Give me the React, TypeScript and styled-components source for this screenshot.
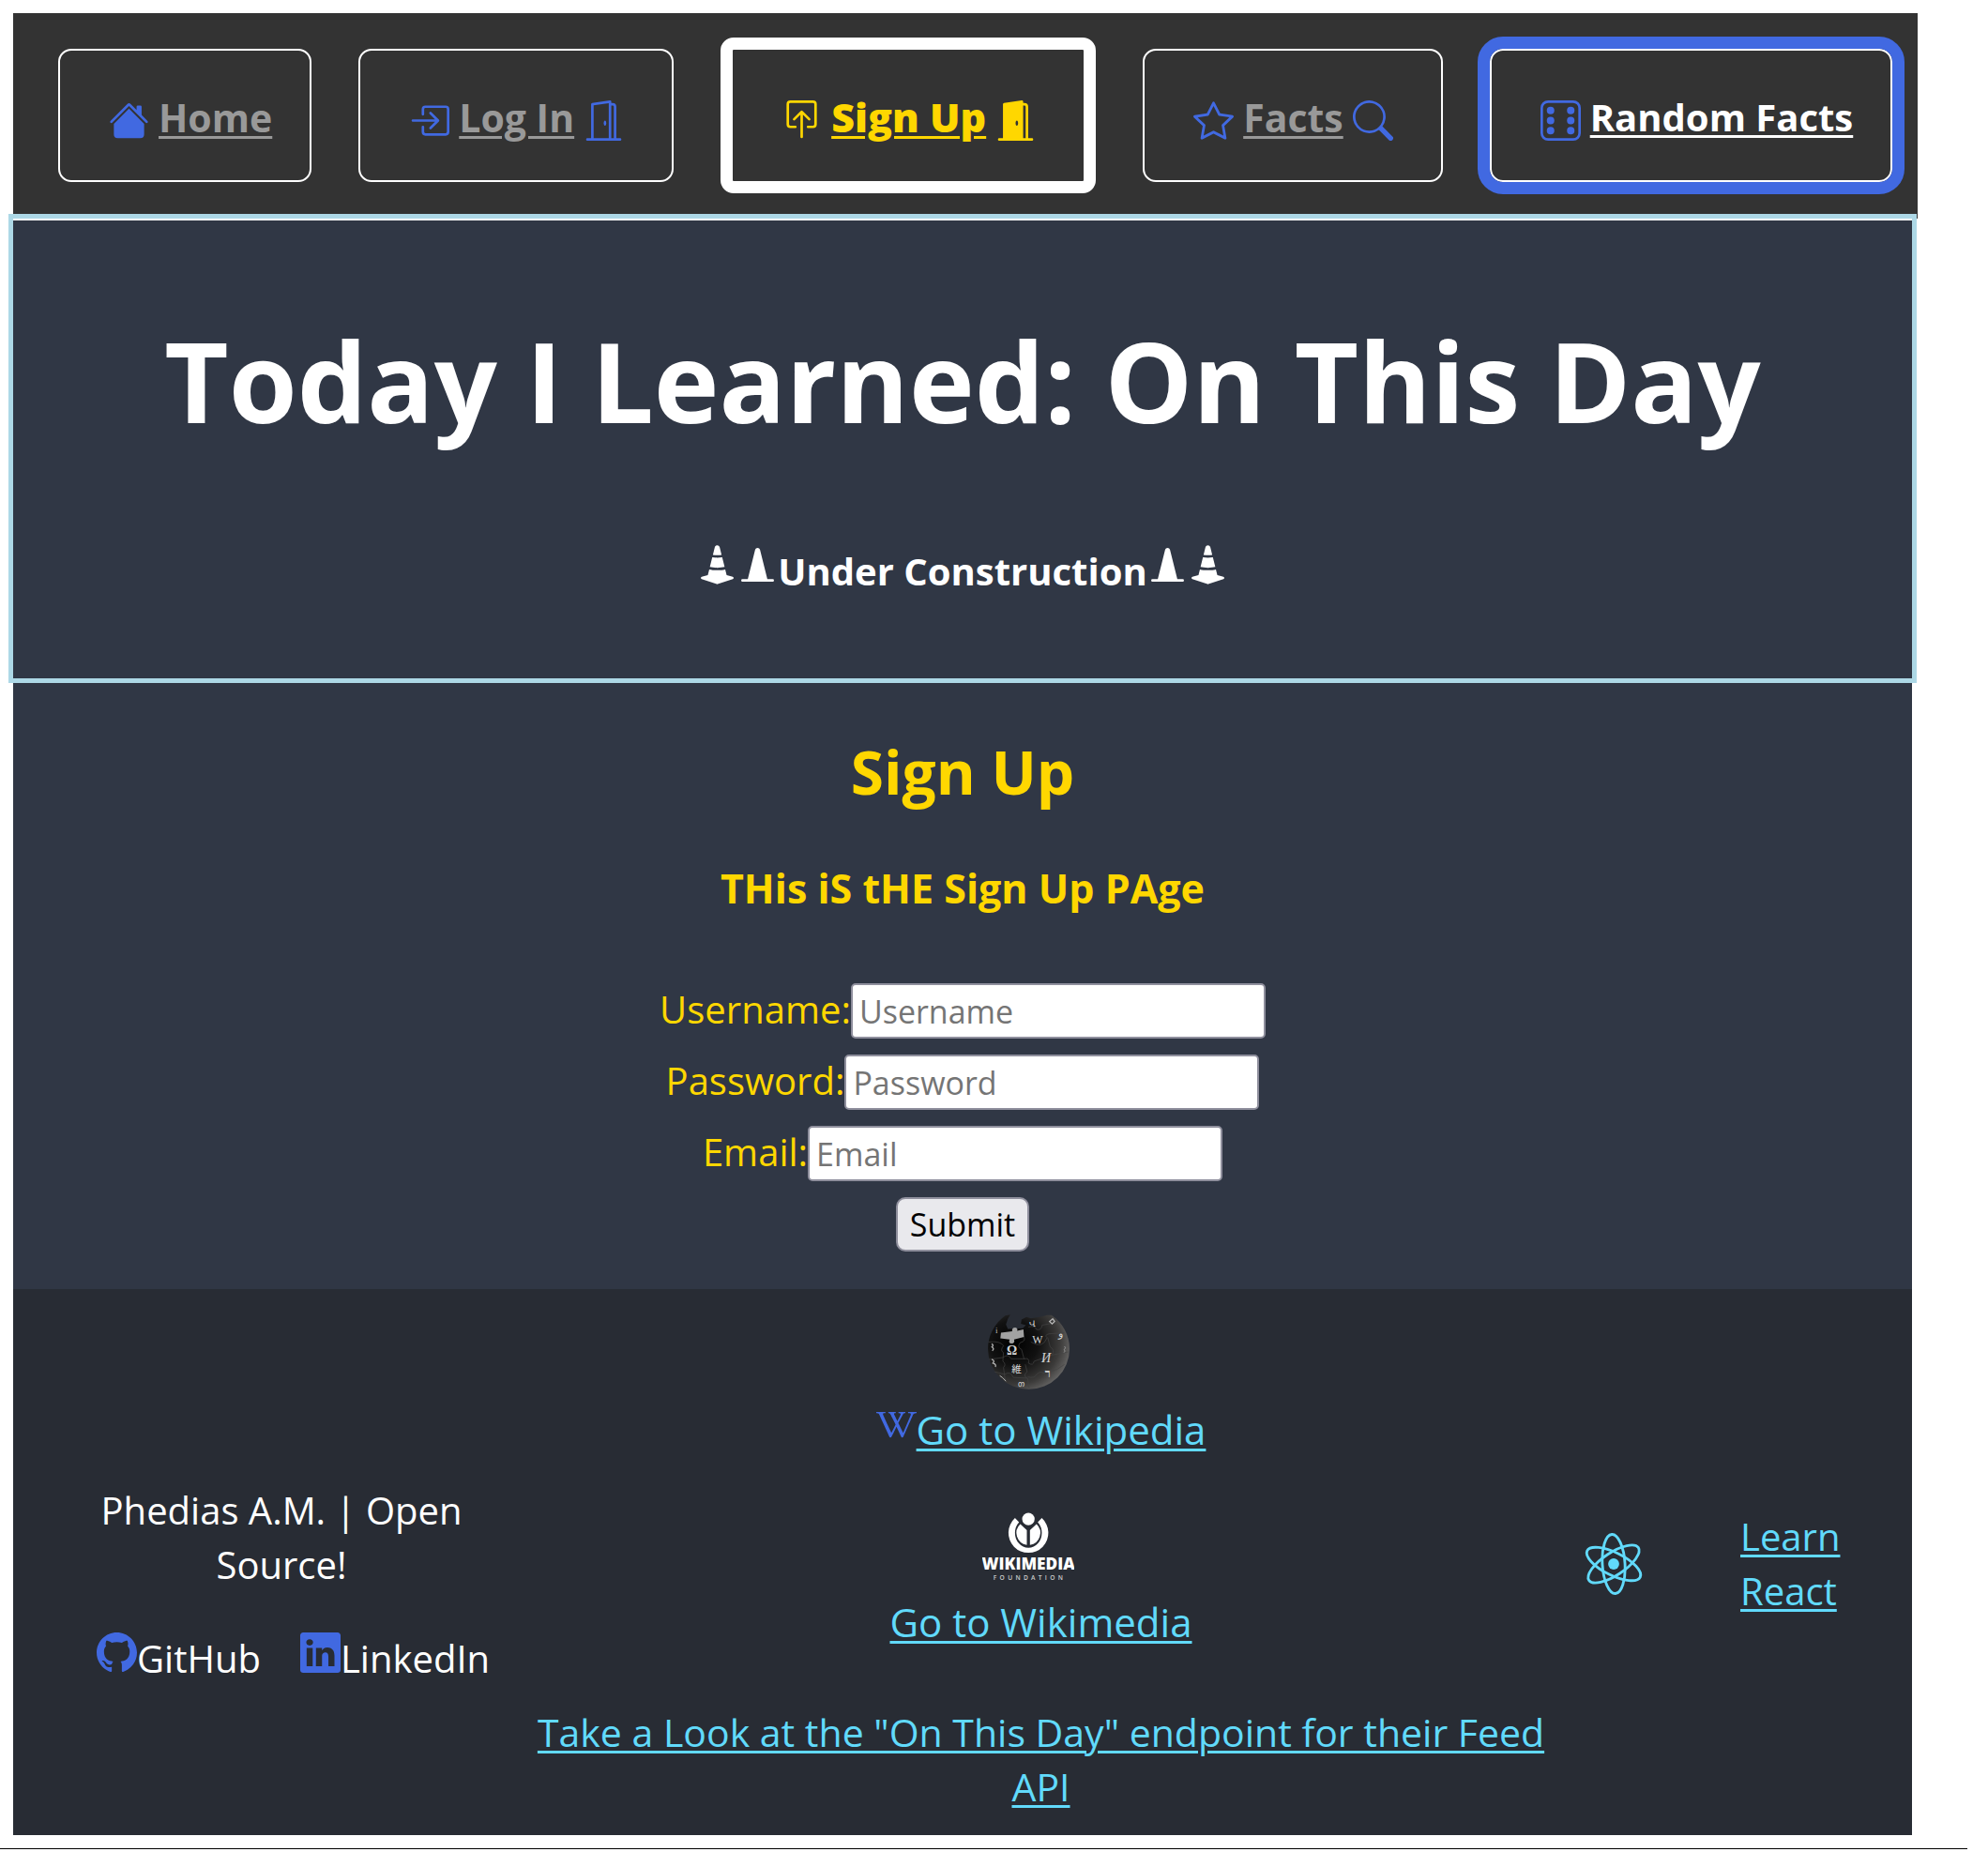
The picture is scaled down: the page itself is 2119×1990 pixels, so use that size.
import React from "react";
import styled, { createGlobalStyle, css } from "styled-components";
import {
  BsBoxArrowInRight,
  BsBoxArrowInUp,
  BsCone,
  BsConeStriped,
  BsDice6,
  BsDoorOpen,
  BsDoorOpenFill,
  BsGithub,
  BsHouseFill,
  BsLinkedin,
  BsSearch,
  BsStar,
  BsWikipedia,
} from "react-icons/bs";

const color = {
  royal: "#4169e1",
  gold: "#ffd700",
  sky: "#61dafb",
  pale: "#add8e6",
  bar: "#333333",
  main: "#303745",
  footer: "#282c34",
  muted: "#999999",
};

const GlobalStyle = createGlobalStyle`
  *, *::before, *::after { box-sizing: border-box; }
  body {
    margin: 0;
    background: #fff;
    color: #fff;
    font-family: "Open Sans", "Noto Sans", sans-serif;
    font-size: 40px;
    line-height: 58px;
  }
  h1, h2, h3, p { margin: 0; }
  a { color: inherit; }
`;

const Page = styled.div`
  margin-right: 22px;
  padding: 14px 59px 14px 14px;
  border-bottom: 1px solid #000;
`;

const Nav = styled.nav`
  display: flex;
  align-items: center;
  gap: 50px;
  height: 219px;
  margin-right: -6px;
  padding: 0 28px 2px 48px;
  background: ${color.bar};
`;

type Tone = "plain" | "current" | "focused";

const NavItem = styled.div<{ $tone: Tone; $trailing: boolean }>`
  display: flex;
  align-items: center;
  gap: 10px;
  height: 142px;
  padding: 4px ${(p) => (p.$trailing ? 51 : 40)}px 0 52px;
  border: 2px solid #fff;
  border-radius: 14px;
  font-size: 41px;
  font-weight: 700;
  white-space: nowrap;
  color: ${color.muted};

  svg {
    flex: none;
    width: 43px;
    height: 43px;
    margin-top: 7px;
    color: ${color.royal};
  }

  ${(p) =>
    p.$tone === "current" &&
    css`
      height: 166px;
      border-width: 13px;
      color: ${color.gold};
      font-size: 43px;
      font-weight: 800;
      svg {
        color: ${color.gold};
      }
    `}

  ${(p) =>
    p.$tone === "focused" &&
    css`
      outline: 13px solid ${color.royal};
      color: #fff;
      font-size: 40px;
    `}
`;

const NavLink = styled.a`
  text-decoration-thickness: 3px;
  text-underline-offset: 4px;
`;

const Hero = styled.header`
  position: relative;
  display: flex;
  flex-direction: column;
  align-items: center;
  gap: 88px;
  padding: 85px 24px 85px;
  border-top: 2px solid #fff;
  outline: 5px solid ${color.pale};
  background: ${color.main};
  text-align: center;
`;

const Title = styled.h1`
  font-size: 118px;
  line-height: 172px;
  font-weight: 700;
`;

const Notice = styled.h3`
  display: flex;
  align-items: baseline;
  justify-content: center;
  font-size: 40px;
  font-weight: 700;

  svg {
    width: 43px;
    height: 43px;
  }
`;

const Main = styled.main`
  display: flex;
  flex-direction: column;
  align-items: center;
  padding: 57px 24px 40px;
  background: ${color.main};
  color: ${color.gold};
  text-align: center;
`;

const PageTitle = styled.h2`
  font-size: 64px;
  line-height: 86px;
`;

const PageLead = styled.h3`
  margin: 52px 0 72px;
  font-size: 43px;
`;

const Form = styled.form`
  display: flex;
  flex-direction: column;
  align-items: center;
  gap: 17px;
`;

const Field = styled.div`
  display: flex;
  align-items: baseline;
  height: 59px;
`;

const Label = styled.label`
  font-size: 40px;
  line-height: 48px;
`;

const Input = styled.input`
  width: 442px;
  height: 59px;
  padding: 0 7px;
  border: 2px solid #8f8f9d;
  border-radius: 5px;
  background: #fff;
  color: #000;
  font: 34px "Open Sans", "Noto Sans", sans-serif;

  &::placeholder {
    color: #757575;
    opacity: 1;
  }
`;

const Submit = styled.button`
  height: 58px;
  padding: 0 13px;
  border: 2px solid #8f8f9d;
  border-radius: 10px;
  background: #e9e9ed;
  color: #000;
  font: 34px "Open Sans", "Noto Sans", sans-serif;
`;

const Footer = styled.footer`
  display: grid;
  grid-template-columns: 429px minmax(0, 1fr) auto;
  align-items: center;
  column-gap: 40px;
  padding: 27px 77px 23px 89px;
  background: ${color.footer};
`;

const Author = styled.section`
  padding-top: 44px;
`;

const Credit = styled.p`
  max-width: 394px;
  margin-bottom: 42px;
  text-align: center;
`;

const Profiles = styled.div`
  display: flex;
  gap: 42px;
`;

const IconText = styled.span`
  display: inline-flex;
  align-items: baseline;

  svg {
    flex: none;
    width: 43px;
    height: 43px;
    color: ${color.royal};
  }
`;

const ProfileLink = styled.a`
  text-decoration: none;
`;

const Sources = styled.section`
  display: flex;
  flex-direction: column;
  align-items: center;
  gap: 59px;
  font-size: 41px;
  text-align: center;
`;

const Source = styled.div`
  display: flex;
  flex-direction: column;
  align-items: center;
  gap: 14px;
  font-size: 42px;
`;

const Logo = styled.svg`
  display: block;
  margin-right: 26px;
`;

const TextLink = styled.a`
  color: ${color.sky};
  text-decoration-thickness: 3px;
  text-underline-offset: 4px;
`;

const Learn = styled.section`
  display: flex;
  align-items: center;
  gap: 102px;
`;

const LearnLink = styled(TextLink)`
  width: 106px;
`;

const Globe = () => (
  <Logo width="87" height="80" viewBox="0 0 262 240" role="img" aria-label="Wikipedia">
    <defs>
      <radialGradient id="globe" cx="0.32" cy="0.38" r="0.75">
        <stop offset="0" stopColor="#000" />
        <stop offset="0.4" stopColor="#111" />
        <stop offset="0.75" stopColor="#3c3b3a" />
        <stop offset="1" stopColor="#706f6e" />
      </radialGradient>
    </defs>
    <path
      d="M56 3 L72 0 L64 14 L58 32 L64 46 L112 44 L122 34 L106 30 L108 16 L124 8 L138 12 L166 8 L190 2 L204 2 A131 131 0 0 1 262 110 A131 130 0 0 1 0 110 A131 131 0 0 1 56 3 Z"
      fill="url(#globe)"
    />
    <path d="M42 58 L78 54 Q76 42 88 42 Q97 44 94 52 L114 48 L116 72 L84 80 Q88 92 76 93 Q64 92 70 80 L40 76 Z" fill="#a2a2a2" />
    <g fill="none" stroke="#444" strokeWidth="2">
      <path d="M2 88 Q40 84 50 100 Q38 116 50 122 L48 150 Q60 160 50 170 L56 214" />
      <path d="M116 72 Q122 86 104 90 Q92 104 108 112 L116 142 Q136 138 130 156 Q146 166 148 150 L206 130 L258 120" />
      <path d="M4 144 L48 138 Q66 124 74 142 L118 142" />
      <path d="M130 40 Q150 34 156 48 Q172 52 174 34 L220 26" />
      <path d="M138 88 Q176 112 190 74 Q180 66 196 62 L246 58" />
      <path d="M206 130 Q216 112 200 104 L192 74" />
      <path d="M120 160 L126 184 Q110 196 128 206 L132 236" />
      <path d="M128 200 Q150 206 156 192 Q170 180 178 188 L222 176 L246 160" />
      <path d="M22 184 L54 192 Q72 180 82 202 L126 204" />
    </g>
    <g fill="#d4d4d4" textAnchor="middle" fontFamily='"Liberation Serif", "Noto Sans CJK JP", serif'>
      <text x="77" y="130" fontSize="42" fontWeight="700">Ω</text>
      <text x="159" y="94" fontSize="36">W</text>
      <text x="187" y="153" fontSize="42" fontStyle="italic">И</text>
      <text x="92" y="186" fontSize="32">維</text>
      <text x="192" y="202" fontSize="36" fontWeight="700">ר</text>
      <text x="144" y="40" fontSize="26">Վ</text>
      <text x="234" y="72" fontSize="34">و</text>
      <text x="108" y="232" fontSize="26">თ</text>
      <text x="28" y="60" fontSize="22">i</text>
    </g>
    <g fill="none" stroke="#b4b4b4" strokeWidth="4">
      <path d="M198 22 L208 14 L214 22 L206 30 Z" />
      <path d="M12 94 Q20 98 13 104 Q22 110 14 116" />
      <path d="M12 144 Q24 148 16 156 Q28 160 24 168" />
      <path d="M246 102 Q252 108 245 112 Q250 118 244 122" strokeWidth="2" />
      <path d="M38 196 Q46 200 58 214" strokeWidth="3" />
    </g>
  </Logo>
);

const Wikimedia = () => (
  <Logo width="98" height="74" viewBox="0 0 295 222" role="img" aria-label="Wikimedia Foundation">
    <g fill="#fff">
      <circle cx="148" cy="21" r="20" />
      <path d="M105 18 L118 31 A43 48 0 1 0 178 31 L191 18 A64 64 0 1 1 105 18 Z" />
      <path d="M143 104 A39 39 0 0 1 122 37 L143 57 Z" />
      <path d="M153 104 A39 39 0 0 0 174 37 L153 57 Z" />
    </g>
    <g fill="#fff" textAnchor="middle" fontFamily='"Open Sans", sans-serif'>
      <text x="148" y="184" fontSize="52" fontWeight="800">
        WIKIMEDIA
      </text>
      <text x="152" y="217" fontSize="20" fontWeight="600" letterSpacing="10" fill="#ccc">
        FOUNDATION
      </text>
    </g>
  </Logo>
);

const Atom = () => (
  <svg width="66" height="66" viewBox="-11.5 -11.5 23 23" role="img" aria-label="React">
    <circle r="2.05" fill={color.sky} />
    <g fill="none" stroke={color.sky} strokeWidth="1" transform="rotate(26.5)">
      <ellipse rx="11" ry="4.2" />
      <ellipse rx="11" ry="4.2" transform="rotate(60)" />
      <ellipse rx="11" ry="4.2" transform="rotate(120)" />
    </g>
  </svg>
);

type NavEntry = {
  text: string;
  tone: Tone;
  before: React.ReactNode;
  after?: React.ReactNode;
};

const navEntries: NavEntry[] = [
  { text: "Home", tone: "plain", before: <BsHouseFill /> },
  { text: "Log In", tone: "plain", before: <BsBoxArrowInRight />, after: <BsDoorOpen /> },
  { text: "Sign Up", tone: "current", before: <BsBoxArrowInUp />, after: <BsDoorOpenFill /> },
  { text: "Facts", tone: "plain", before: <BsStar />, after: <BsSearch /> },
  { text: "Random Facts", tone: "focused", before: <BsDice6 /> },
];

const fields = [
  { id: "username", label: "Username", type: "text" },
  { id: "password", label: "Password", type: "password" },
  { id: "email", label: "Email", type: "email" },
];

export default function App() {
  return (
    <>
      <GlobalStyle />
      <Page>
        <Nav>
          {navEntries.map((entry) => (
            <NavItem key={entry.text} $tone={entry.tone} $trailing={Boolean(entry.after)}>
              {entry.before}
              <NavLink href="#">{entry.text}</NavLink>
              {entry.after}
            </NavItem>
          ))}
        </Nav>

        <Hero>
          <Title>Today I Learned: On This Day</Title>
          <Notice>
            <BsConeStriped />
            <BsCone />
            <span>Under Construction</span>
            <BsCone />
            <BsConeStriped />
          </Notice>
        </Hero>

        <Main>
          <PageTitle>Sign Up</PageTitle>
          <PageLead>THis iS tHE Sign Up PAge</PageLead>
          <Form onSubmit={(e) => e.preventDefault()}>
            {fields.map((field) => (
              <Field key={field.id}>
                <Label htmlFor={field.id}>{field.label}:</Label>
                <Input id={field.id} type={field.type} placeholder={field.label} />
              </Field>
            ))}
            <Submit type="submit">Submit</Submit>
          </Form>
        </Main>

        <Footer>
          <Author>
            <Credit>Phedias A.M. | Open Source!</Credit>
            <Profiles>
              <ProfileLink href="#">
                <IconText>
                  <BsGithub />
                  GitHub
                </IconText>
              </ProfileLink>
              <ProfileLink href="#">
                <IconText>
                  <BsLinkedin />
                  LinkedIn
                </IconText>
              </ProfileLink>
            </Profiles>
          </Author>

          <Sources>
            <Source>
              <Globe />
              <IconText>
                <BsWikipedia />
                <TextLink href="#">Go to Wikipedia</TextLink>
              </IconText>
            </Source>
            <Source>
              <Wikimedia />
              <TextLink href="#">Go to Wikimedia</TextLink>
            </Source>
            <TextLink href="#">Take a Look at the "On This Day" endpoint for their Feed API</TextLink>
          </Sources>

          <Learn>
            <Atom />
            <LearnLink href="#">Learn React</LearnLink>
          </Learn>
        </Footer>
      </Page>
    </>
  );
}
